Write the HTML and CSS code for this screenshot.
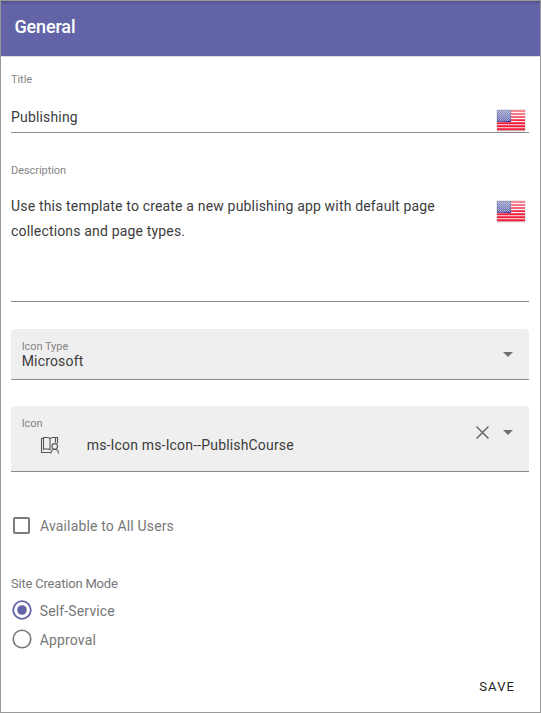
FILE: index.html
```
<!DOCTYPE html>
<html lang="en">
<head>
<meta charset="utf-8">
<title>General</title>
<link rel="stylesheet" href="styles.css">
</head>
<body>
<svg width="0" height="0" class="defs">
  <defs>
    <pattern id="stars" width="2" height="2" patternUnits="userSpaceOnUse">
      <rect width="1" height="1" fill="#c3c6e4"/><rect x="1" y="1" width="1" height="1" fill="#b0b4da"/>
    </pattern>
    <linearGradient id="shine" x1="0" y1="0" x2="0" y2="1">
      <stop offset="0" stop-color="#fff" stop-opacity=".5"/><stop offset="1" stop-color="#fff" stop-opacity=".2"/>
    </linearGradient>
    <symbol id="flag" viewBox="0 0 30 23">
      <rect x="0.5" y="0.5" width="29" height="22" rx="1" fill="#d9d4d4"/>
      <rect x="1" y="1" width="28" height="20" fill="#fbeaec"/>
      <path d="M1 2h28M1 5h28M1 8h28M1 11h28M1 14.2h28M1 17.2h28M1 20.2h28" stroke="#ee1c38" stroke-width="1.9"/>
      <rect x="1" y="1" width="14" height="12" fill="#303690"/>
      <rect x="2" y="2" width="12" height="10" fill="url(#stars)" opacity=".6"/>
      <path d="M1 1h28v10q-14 0-28 3z" fill="url(#shine)"/>
    </symbol>
  </defs>
</svg>
<main class="panel">
  <header class="bar">General</header>
  <form class="form">
    <div class="field title">
      <label class="label">Title</label>
      <div class="row"><span class="value">Publishing</span><svg class="flag"><use href="#flag"/></svg></div>
    </div>
    <div class="field description">
      <label class="label">Description</label>
      <div class="row"><p class="value">Use this template to create a new publishing app with default page collections and page types.</p><svg class="flag"><use href="#flag"/></svg></div>
    </div>
    <div class="select type">
      <div class="content"><label class="label">Icon Type</label><span class="value">Microsoft</span></div>
      <svg class="arrow" viewBox="0 0 10 5"><path d="M0 0h10L5 5z"/></svg>
    </div>
    <div class="select icon">
      <div class="content">
        <label class="label">Icon</label>
        <div class="choice">
          <svg class="course" viewBox="0 0 20 18"><path d="M3.500 2.500h-2v14h9M3.500 14V1.500h4q2 0 2.500 1.500v11q-.5-1-2.500-1h-4M10 3q.5-1.500 2.500-1.500h5v6M15.500 1.500v5M11 17.500q0-4 3.700-4.200 3.800.2 3.800 4.200"/><circle cx="14.700" cy="10.400" r="2.800"/></svg>
          <span class="value">ms-Icon ms-Icon--PublishCourse</span>
        </div>
      </div>
      <svg class="clear" viewBox="0 0 12 12"><path d="M.5.5l11 11M11.500.5l-11 11"/></svg>
      <svg class="arrow" viewBox="0 0 10 5"><path d="M0 0h10L5 5z"/></svg>
    </div>
    <div class="option available"><span class="box"></span><span>Available to All Users</span></div>
    <div class="legend">Site Creation Mode</div>
    <div class="option"><svg class="radio selected" viewBox="0 0 20 20"><circle cx="10" cy="10" r="8.800"/><circle class="dot" cx="10" cy="10" r="4.800"/></svg><span>Self-Service</span></div>
    <div class="option"><svg class="radio" viewBox="0 0 20 20"><circle cx="10" cy="10" r="8.800"/></svg><span>Approval</span></div>
    <div class="actions"><span class="save">SAVE</span></div>
  </form>
</main>
</body>
</html>
```
FILE: styles.css
```
* { box-sizing: border-box; }
body { margin: 0; font: 14px/20px Roboto, "Liberation Sans", sans-serif; color: #3c3c3c; background: #fff; }
.defs { display: block; height: 0; }
.panel { width: 541px; height: 713px; border: 1px solid #999; overflow: hidden; }
.bar { height: 56px; padding: 14px 13.500px; background: linear-gradient(#515189, #6264a7 4px); border-bottom: 1px solid #dedede; color: #fff; font-size: 18px; line-height: 24px; font-weight: 500; letter-spacing: -.15px; }
.form { padding: 0 11px 0 10px; }
.label { display: block; font-size: 11px; line-height: 14px; color: #858585; letter-spacing: -.06px; }
.value { margin: 0; letter-spacing: .17px; }
.row { display: flex; justify-content: space-between; align-items: flex-start; }
.flag { width: 30px; height: 23px; margin-right: 3.500px; flex: none; }
.field { border-bottom: 1px solid #8b8b8b; }
.title { height: 76px; padding-top: 16px; }
.title .row { margin-top: 22px; }
.title .value { margin-top: -2px; }
.title .flag { position: relative; z-index: -1; }
.description { height: 169px; padding-top: 31px; }
.description .row { margin-top: 16px; }
.description .value { width: 450px; line-height: 25px; }
.description .flag { margin-top: 6px; }
.select { display: flex; align-items: flex-start; padding: 0 16px 0 10.700px; background: #efefef; border-bottom: 1px solid #8b8b8b; border-radius: 4px 4px 0 0; }
.select .content { flex: 1; padding-top: 11px; }
.select .value { line-height: 14px; display: block; }
.type { height: 51px; margin-top: 27px; }
.icon { height: 66px; margin-top: 26px; }
.arrow { width: 10px; height: 5px; margin-top: 23px; fill: #707070; }
.icon .arrow { margin-top: 24px; }
.clear { width: 13px; height: 13px; margin: 20px 14px 0 0; fill: none; stroke: #686868; stroke-width: 1.400; }
.choice { display: flex; align-items: center; height: 28px; padding-left: 18px; }
.course { width: 20px; height: 18px; margin-right: 27px; fill: none; stroke: #555; stroke-width: 1.100; }
.option { display: flex; align-items: center; gap: 8px; height: 29px; padding-left: 1px; color: #777; letter-spacing: .15px; }
.available { margin-top: 39px; }
.radio { width: 20px; height: 20px; margin: -1px 0 1px -.3px; fill: none; stroke: #777; stroke-width: 1.600; }
.box { width: 17px; height: 17px; margin: 0 2px 0 1px; border: 2px solid #7c7c7c; border-radius: 2px; }
.selected { stroke: #6264a7; stroke-width: 1.800; }
.dot { fill: #6264a7; stroke: none; }
.legend { margin-top: 34px; height: 22px; font-size: 13px; color: #777; letter-spacing: -.2px; }
.actions { display: flex; justify-content: flex-end; margin-top: 23px; padding-right: 14px; }
.save { color: #222; font-size: 13px; font-weight: 400; letter-spacing: 1.100px; }
```
